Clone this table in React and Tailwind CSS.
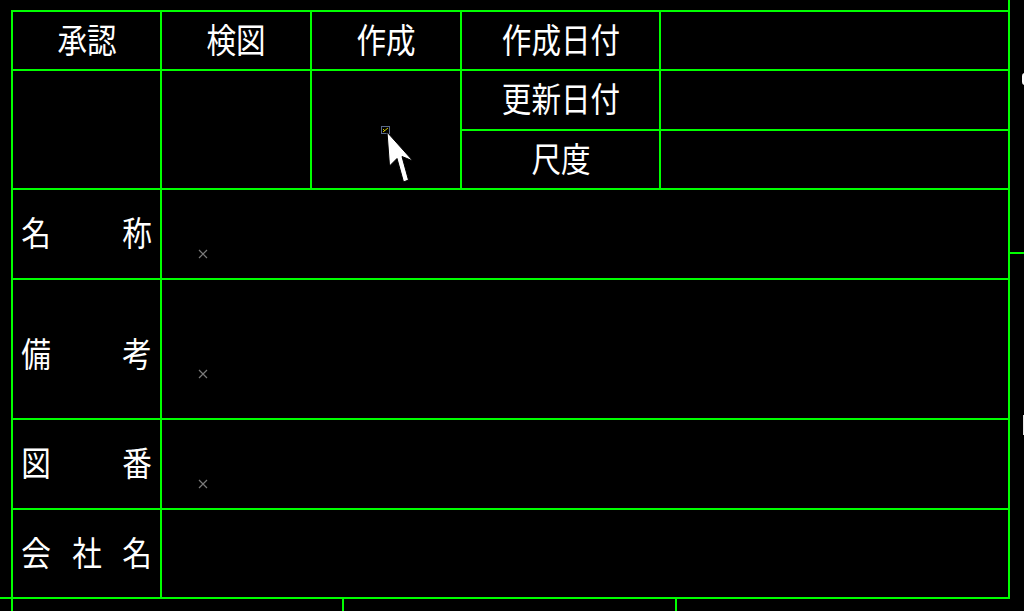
import React from "react";

const FONT = { fontFamily: '"Noto Sans CJK JP", "Noto Sans", sans-serif' };

function T({ children }) {
  return (
    <span className="inline-block -translate-y-[2px] scale-x-[0.87] whitespace-nowrap text-[34px] leading-none text-white">
      {children}
    </span>
  );
}

function Label({ chars, extra = "" }) {
  return (
    <div className={`flex items-center justify-between bg-black px-[6px] ${extra}`}>
      {chars.map((c, i) => (
        <T key={i}>{c}</T>
      ))}
    </div>
  );
}

function Cross({ top }) {
  return (
    <svg
      className="absolute left-[36px]"
      style={{ top }}
      width="10"
      height="10"
      viewBox="0 0 10 10"
    >
      <path d="M1 1 L9 9 M9 1 L1 9" stroke="#7a7a7a" strokeWidth="1.2" />
    </svg>
  );
}

export default function App() {
  return (
    <div className="relative h-[611px] w-[1024px] overflow-hidden bg-black" style={FONT}>
      <div className="ml-[11px] mt-[10px] grid w-[999px] grid-cols-[147px_148px_148px_197px_347px] grid-rows-[57px_58px_57px_88px_138px_88px_87px] gap-[2px] bg-[#00ff00] p-[2px]">
        {/* row 1 */}
        <div className="flex items-center justify-center bg-black"><T>承認</T></div>
        <div className="flex items-center justify-center bg-black"><T>検図</T></div>
        <div className="flex items-center justify-center bg-black"><T>作成</T></div>
        <div className="flex items-center justify-center bg-black"><T>作成日付</T></div>
        <div className="bg-black" />
        {/* row 2-3 */}
        <div className="row-span-2 bg-black" />
        <div className="row-span-2 bg-black" />
        <div className="row-span-2 bg-black" />
        <div className="flex items-center justify-center bg-black"><T>更新日付</T></div>
        <div className="bg-black" />
        <div className="flex items-center justify-center bg-black"><T>尺度</T></div>
        <div className="bg-black" />
        {/* row 4 */}
        <Label chars={["名", "称"]} />
        <div className="relative col-span-4 bg-black"><Cross top={59} /></div>
        {/* row 5 */}
        <Label chars={["備", "考"]} extra="pt-[12px]" />
        <div className="relative col-span-4 bg-black"><Cross top={89} /></div>
        {/* row 6 */}
        <Label chars={["図", "番"]} />
        <div className="relative col-span-4 bg-black"><Cross top={59} /></div>
        {/* row 7 */}
        <Label chars={["会", "社", "名"]} />
        <div className="col-span-4 bg-black" />
      </div>

      {/* drawing lines outside the title block */}
      <div className="absolute left-[1008px] top-0 h-[10px] w-[2px] bg-[#00ff00]" />
      <div className="absolute left-[1010px] top-[252px] h-[2px] w-[14px] bg-[#00ff00]" />
      <div className="absolute left-0 top-[597px] h-[2px] w-[11px] bg-[#00ff00]" />
      <div className="absolute left-[11px] top-[599px] h-[12px] w-[2px] bg-[#00ff00]" />
      <div className="absolute left-[342px] top-[599px] h-[12px] w-[2px] bg-[#00ff00]" />
      <div className="absolute left-[675px] top-[599px] h-[12px] w-[2px] bg-[#00ff00]" />

      {/* clipped text fragments at right edge */}
      <div className="absolute left-[1022px] top-[73px] h-[12px] w-[3px] rounded-l-full bg-white" />
      <div className="absolute left-[1023px] top-[415px] h-[20px] w-[2px] bg-[#e8e8e8]" />

      {/* snap marker + cursor */}
      <svg className="absolute left-[381px] top-[126px]" width="10" height="9" viewBox="0 0 10 9">
        <rect x="0.5" y="0.5" width="8" height="7" fill="none" stroke="#5a6a8a" strokeWidth="1" />
        <path d="M2 6 L7 2 M2 3 L4 5" stroke="#d8c800" strokeWidth="1" />
      </svg>
      <svg className="absolute left-[380px] top-[124px]" width="40" height="64" viewBox="0 0 40 64">
        <path
          d="M7 8 L9.5 42 L17 34.5 L23.5 58 L28.5 56 L22 32.5 L33 37 Z"
          fill="#ffffff"
          stroke="#000000"
          strokeWidth="1"
        />
      </svg>
    </div>
  );
}
